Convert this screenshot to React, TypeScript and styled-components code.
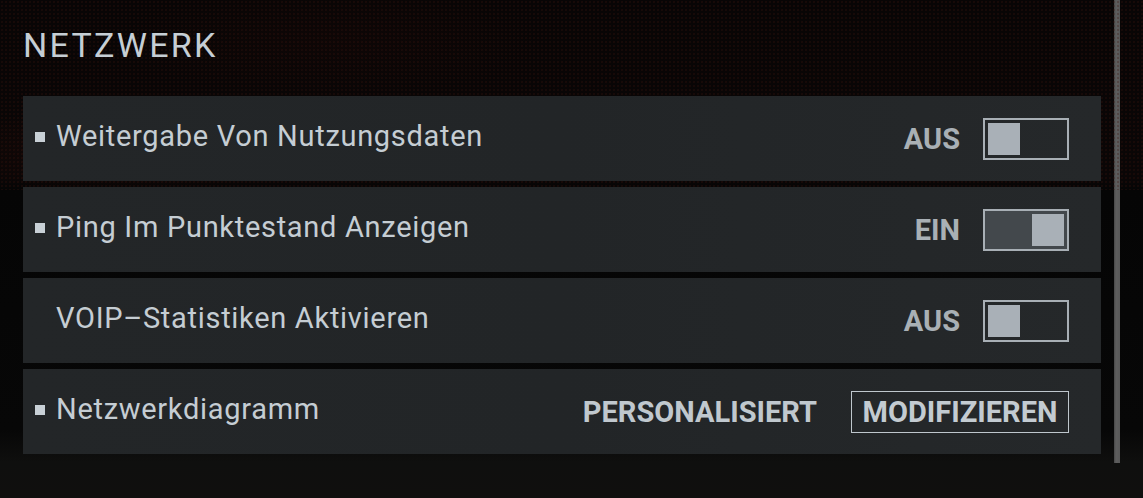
import React from "react";
import styled, { createGlobalStyle } from "styled-components";

const Global = createGlobalStyle`
  html, body { margin: 0; padding: 0; background: #0a0808; }
  body { font-family: Roboto, "Liberation Sans", sans-serif; }
  * { box-sizing: border-box; }
`;

const Page = styled.div`
  position: relative;
  width: 1143px;
  height: 498px;
  overflow: hidden;
  display: flex;
  align-items: flex-start;
  background:
    radial-gradient(ellipse 260px 60px at 120px 150px, rgba(55, 16, 10, 0.25), transparent 70%),
    radial-gradient(ellipse 300px 80px at 330px 40px, rgba(45, 14, 9, 0.15), transparent 70%),
    linear-gradient(180deg, #080505 0px, #0a0606 180px, #050505 190px, #070707 430px, #0f0f0e 462px, #100f0e 498px);
  &::before {
    content: "";
    position: absolute;
    left: 0;
    top: 0;
    width: 100%;
    height: 190px;
    background: radial-gradient(circle, rgba(60, 20, 14, 0.28) 0.9px, transparent 1.4px) 0 0 / 4px 4px;
    pointer-events: none;
  }
`;

const Content = styled.div`
  position: relative;
  width: 1101px;
  padding-left: 23px;
  padding-top: 25px;
  display: flex;
  flex-direction: column;
`;

const Heading = styled.h1`
  margin: 0 0 31px 0;
  font-family: Roboto, "Liberation Sans", sans-serif;
  font-weight: 400;
  font-size: 34px;
  line-height: 40px;
  letter-spacing: 2.3px;
  color: #c6ced4;
`;

const List = styled.div`
  display: flex;
  flex-direction: column;
  gap: 6px;
`;

const Row = styled.div`
  height: 85px;
  display: flex;
  align-items: center;
  padding: 0 32px 0 12px;
  background: linear-gradient(90deg, #232628 0%, #222527 50%, #25282a 100%);
`;

const Bullet = styled.span<{ $hidden?: boolean }>`
  width: 10px;
  height: 10px;
  flex: none;
  margin-right: 11px;
  margin-bottom: 4px;
  background: ${(p) => (p.$hidden ? "transparent" : "#c8d0d6")};
`;

const Label = styled.span`
  flex: 1;
  font-size: 29px;
  letter-spacing: 0.7px;
  color: #c5cdd3;
  margin-bottom: 6px;
  white-space: nowrap;
`;

const Value = styled.span<{ $bright?: boolean }>`
  font-weight: 700;
  font-size: 29px;
  color: ${(p) => (p.$bright ? "#c0c8ce" : "#a9b0b5")};
  margin-right: ${(p) => (p.$bright ? "34px" : "23px")};
`;

const Toggle = styled.div<{ $on?: boolean }>`
  width: 86px;
  height: 42px;
  border: 2px solid #a8afb5;
  padding: 3px;
  display: flex;
  justify-content: ${(p) => (p.$on ? "flex-end" : "flex-start")};
  background: ${(p) => (p.$on ? "#43484c" : "transparent")};
`;

const Knob = styled.div`
  width: 32px;
  height: 32px;
  background: #a9b0b7;
`;

const Button = styled.div`
  height: 42px;
  width: 218px;
  border: 1px solid #bfc7cd;
  display: flex;
  align-items: center;
  justify-content: center;
  font-weight: 700;
  font-size: 29px;
  color: #c3cbd1;
`;

const Scrollbar = styled.div`
  width: 6px;
  height: 463px;
  margin-left: 13px;
  background: linear-gradient(90deg, #464646 0px, #5e5e5e 2px, #585858 6px);
`;

type Item = { label: string; bullet: boolean; value: string; on?: boolean; button?: string };

const items: Item[] = [
  { label: "Weitergabe Von Nutzungsdaten", bullet: true, value: "AUS", on: false },
  { label: "Ping Im Punktestand Anzeigen", bullet: true, value: "EIN", on: true },
  { label: "VOIP–Statistiken Aktivieren", bullet: false, value: "AUS", on: false },
  { label: "Netzwerkdiagramm", bullet: true, value: "PERSONALISIERT", button: "MODIFIZIEREN" },
];

export default function App() {
  return (
    <>
      <Global />
      <Page>
        <Content>
          <Heading>NETZWERK</Heading>
          <List>
            {items.map((it) => (
              <Row key={it.label}>
                <Bullet $hidden={!it.bullet} />
                <Label>{it.label}</Label>
                <Value $bright={!!it.button}>{it.value}</Value>
                {it.button ? (
                  <Button>{it.button}</Button>
                ) : (
                  <Toggle $on={it.on}>
                    <Knob />
                  </Toggle>
                )}
              </Row>
            ))}
          </List>
        </Content>
        <Scrollbar />
      </Page>
    </>
  );
}
